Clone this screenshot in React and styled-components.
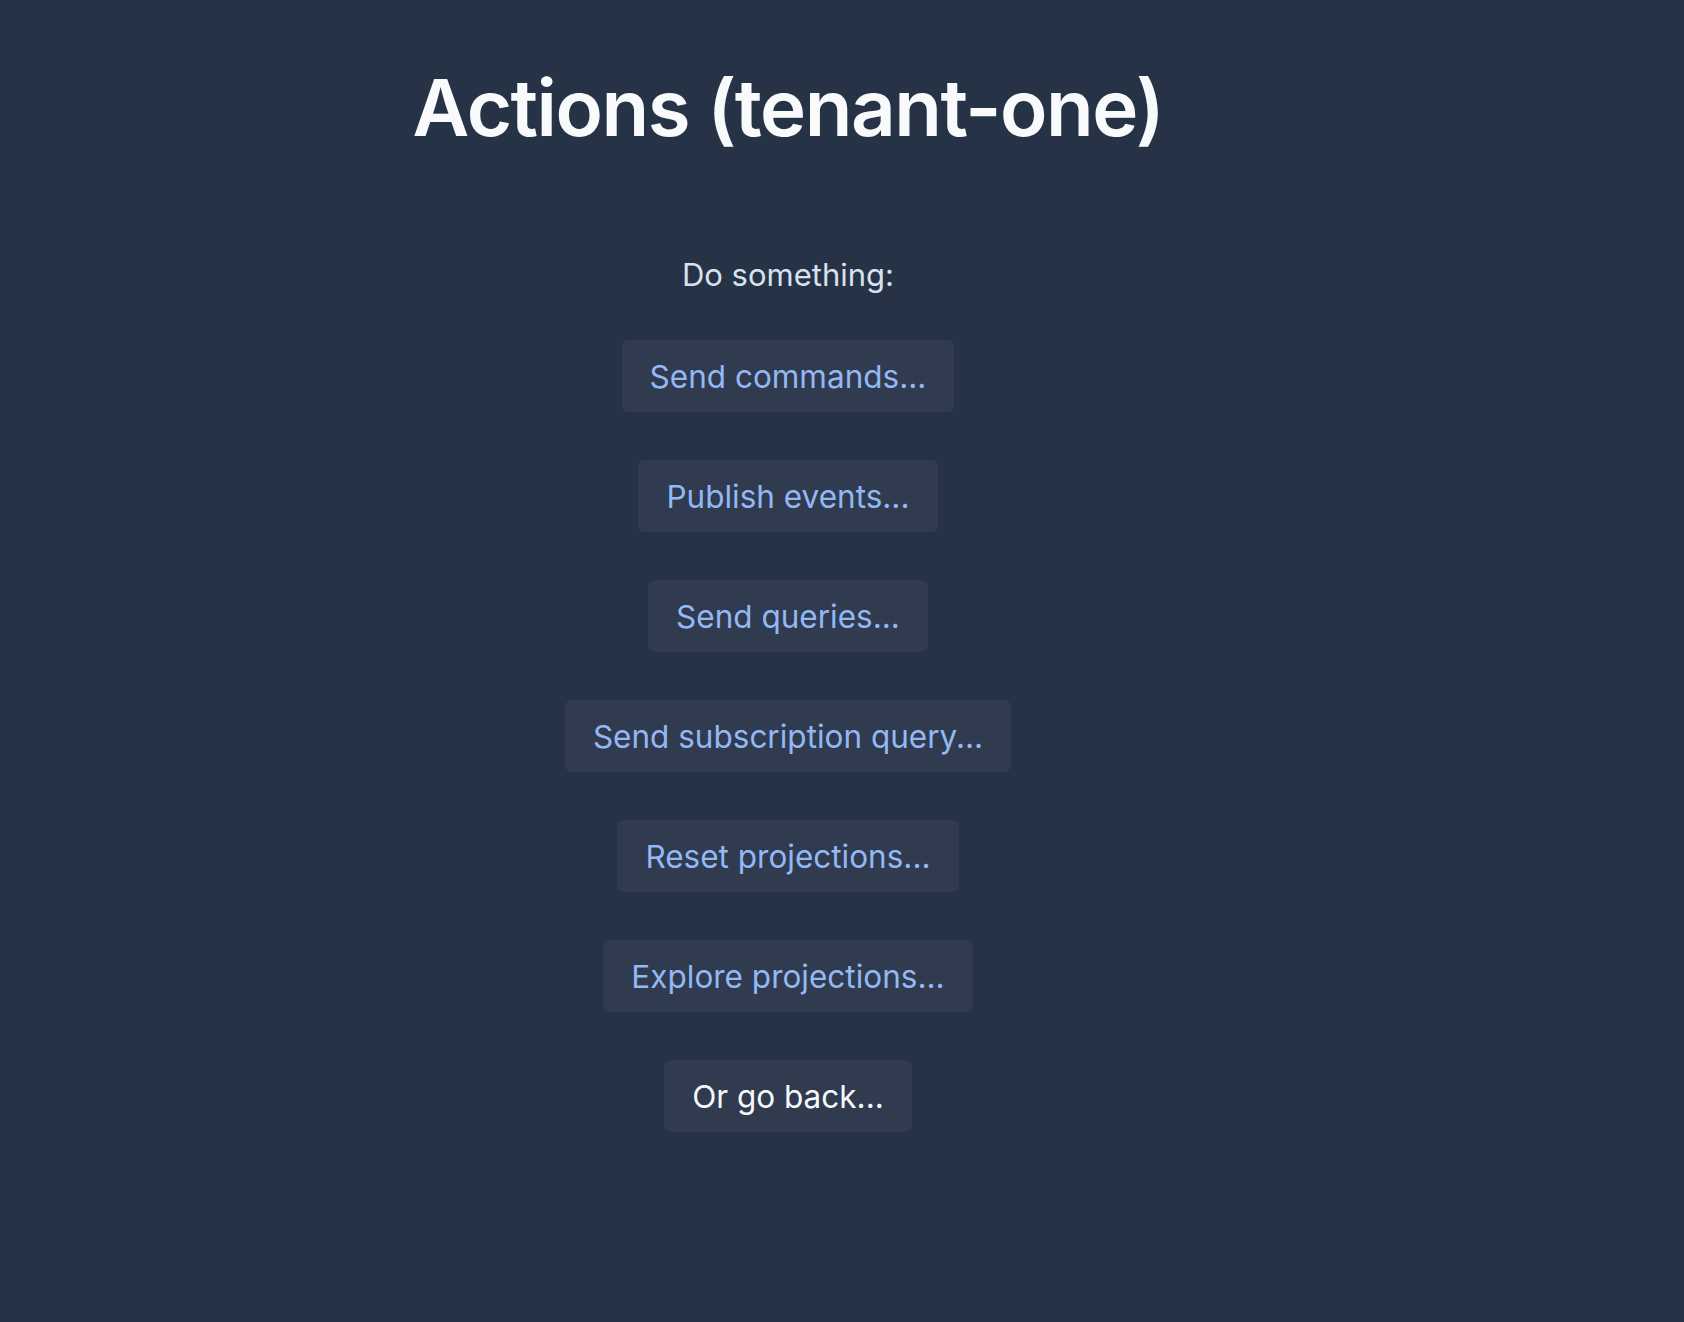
import styled, { createGlobalStyle } from "styled-components";

const GlobalStyle = createGlobalStyle`
  html, body {
    margin: 0;
    padding: 0;
    background: #263246;
  }
  body {
    font-family: Inter, "Noto Sans", "Liberation Sans", sans-serif;
    min-height: 100vh;
  }
`;

const actions = [
  "Send commands...",
  "Publish events...",
  "Send queries...",
  "Send subscription query...",
  "Reset projections...",
  "Explore projections...",
];

function App() {
  return (
    <>
      <GlobalStyle />
      <Page>
        <Title>Actions (tenant-one)</Title>
        <Prompt>Do something:</Prompt>
        <ActionList>
          {actions.map((label) => (
            <ActionButton key={label}>{label}</ActionButton>
          ))}
          <ActionButton $back>Or go back...</ActionButton>
        </ActionList>
      </Page>
    </>
  );
}

const Page = styled.main`
  width: 1576px;
  min-height: 1322px;
  display: flex;
  flex-direction: column;
  align-items: center;
  padding-top: 69px;
  box-sizing: border-box;
`;

const Title = styled.h1`
  margin: 0;
  font-size: 78px;
  line-height: 1;
  font-weight: 600;
  color: #f8fafc;
  letter-spacing: -1.5px;
`;

const Prompt = styled.p`
  margin: 109px 0 0;
  font-size: 31px;
  line-height: 1.2;
  color: #d9e1ee;
`;

const ActionList = styled.div`
  display: flex;
  flex-direction: column;
  align-items: center;
  gap: 48px;
  margin-top: 47px;
`;

const ActionButton = styled.button`
  height: 72px;
  padding: 0 28px;
  border: none;
  border-radius: 7px;
  background: #303b50;
  color: ${({ $back }) => ($back ? "#f5f7fb" : "#93b8f4")};
  font-family: inherit;
  font-size: 31.5px;
  cursor: pointer;
`;

export default App;
